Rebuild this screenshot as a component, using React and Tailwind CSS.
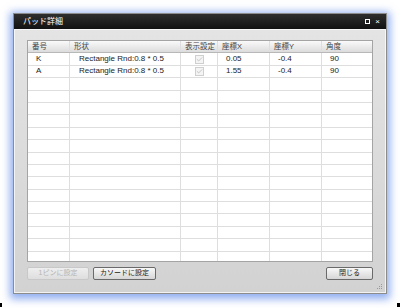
import { Check } from "lucide-react";

const cols = ["w-[42px]", "w-[111px]", "w-[37px]", "w-[52px]", "w-[52px]", "flex-1"];
const headers = ["番号", "形状", "表示設定", "座標X", "座標Y", "角度"];
const pads = [
  { no: "K", shape: "Rectangle Rnd:0.8 * 0.5", x: "0.05", y: "-0.4", angle: "90" },
  { no: "A", shape: "Rectangle Rnd:0.8 * 0.5", x: "1.55", y: "-0.4", angle: "90" },
];
const emptyRows = Array.from({ length: 15 });

const font = { fontFamily: '"Liberation Sans", "Noto Sans CJK JP", sans-serif' };

function Cell({ i, children, className = "" }) {
  return (
    <div className={`${cols[i]} h-full border-r border-[#dedede] last:border-r-0 flex items-center ${className}`}>
      {children}
    </div>
  );
}

function Row({ pad }) {
  return (
    <div className="flex h-[12.4px] border-b border-[#dedede] bg-white text-[8px] text-[#222]">
      <Cell i={0} className="pl-[8px]">{pad?.no}</Cell>
      <Cell i={1} className="pl-[9px]">{pad?.shape}</Cell>
      <Cell i={2} className="justify-center">
        {pad && (
          <span className="flex h-[9px] w-[9px] items-center justify-center border border-[#cfcfcf] bg-[#f4f4f4]">
            <Check size={7} strokeWidth={2.5} className="text-[#b4b4b4]" />
          </span>
        )}
      </Cell>
      <Cell i={3} className="pl-[8px]">{pad?.x}</Cell>
      <Cell i={4} className="pl-[8px]">{pad?.y}</Cell>
      <Cell i={5} className="pl-[8px]">{pad?.angle}</Cell>
    </div>
  );
}

export default function App() {
  return (
    <div className="relative h-[308px] w-[400px] overflow-hidden bg-white pl-[13px] pt-[13px]" style={font}>
      <div className="flex h-[281px] w-[374px] flex-col border border-[#8c8c8c] shadow-[0_2px_8px_3px_rgba(70,120,230,0.6)]">
        <div className="flex h-[15px] items-center justify-between bg-gradient-to-b from-[#2e2e2e] to-[#121212] pl-[9px] pr-[6px]">
          <span className="text-[8px] text-white">パッド詳細</span>
          <div className="flex items-center gap-[5px] text-white">
            <span className="h-[5px] w-[5px] border-[1.5px] border-white" />
            <span className="text-[8px] leading-none">×</span>
          </div>
        </div>

        <div className="relative flex flex-1 flex-col bg-gradient-to-b from-[#e4e4e4] to-[#d2d2d2] px-[13px] pt-[11px] shadow-[inset_0_0_0_1px_rgba(255,255,255,0.7)]">
          <div className="h-[222px] overflow-hidden border border-[#a4a4a4] bg-white">
            <div className="flex h-[12.4px] border-b border-[#b8b8b8] bg-gradient-to-b from-[#fafafa] to-[#dcdcdc] text-[7.5px] text-[#444]">
              {headers.map((h, i) => (
                <Cell key={h} i={i} className="border-[#c4c4c4] pl-[4px]">{h}</Cell>
              ))}
            </div>
            {pads.map((p) => (
              <Row key={p.no} pad={p} />
            ))}
            {emptyRows.map((_, i) => (
              <Row key={i} />
            ))}
          </div>

          <div className="mt-[5px] flex items-center gap-[4px] text-[7px]">
            <button type="button" disabled className="h-[13px] w-[62px] rounded-[2px] border border-[#c8c8c8] bg-gradient-to-b from-[#eeeeee] to-[#dedede] text-[#b4b4b4]">
              1ピンに設定
            </button>
            <button type="button" className="h-[13px] w-[63px] rounded-[2px] border border-[#6a6a6a] bg-gradient-to-b from-[#f8f8f8] to-[#d6d6d6] text-[#222]">
              カソードに設定
            </button>
            <button type="button" className="ml-auto h-[13px] w-[47px] rounded-[2px] border border-[#6a6a6a] bg-gradient-to-b from-[#f8f8f8] to-[#d6d6d6] text-[#222]">
              閉じる
            </button>
          </div>

          <svg className="absolute bottom-[3px] right-[3px]" width="7" height="7" viewBox="0 0 7 7">
            {[[5, 1], [3, 3], [5, 3], [1, 5], [3, 5], [5, 5]].map(([x, y]) => (
              <rect key={`${x}-${y}`} x={x} y={y} width="1" height="1" fill="#9a9a9a" />
            ))}
          </svg>
        </div>
      </div>

      <span className="absolute bottom-[1px] left-0 h-[4px] w-[2px] bg-black" />
      <span className="absolute bottom-[1px] right-0 h-[4px] w-[3px] bg-black" />
    </div>
  );
}
